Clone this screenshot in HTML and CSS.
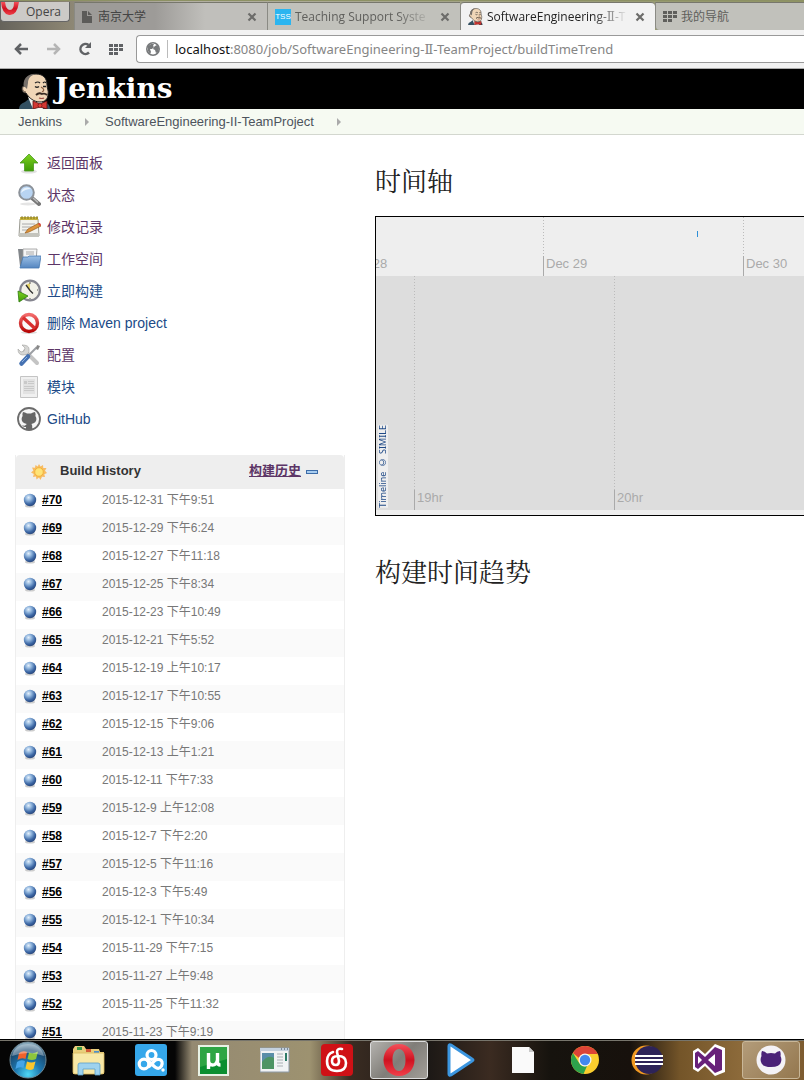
FILE: index.html
```html
<!DOCTYPE html>
<html lang="zh-CN">
<head>
<meta charset="utf-8">
<title>SoftwareEngineering-Ⅱ-TeamProject</title>
<link rel="stylesheet" href="styles.css">
</head>
<body>
<svg class="defs" width="0" height="0" aria-hidden="true">
  <defs>
    <radialGradient id="gBall" cx=".38" cy=".3" r=".7"><stop offset="0" stop-color="#e4f0fb"/><stop offset=".35" stop-color="#8fb4dc"/><stop offset=".75" stop-color="#3b66a4"/><stop offset="1" stop-color="#2a4a80"/></radialGradient>
    <linearGradient id="gGreen" x2="0" y2="1"><stop offset="0" stop-color="#7ed321"/><stop offset="1" stop-color="#3f9a06"/></linearGradient>
    <linearGradient id="gFolder" x2="0" y2="1"><stop offset="0" stop-color="#9cc0e6"/><stop offset="1" stop-color="#5586c0"/></linearGradient>
    <linearGradient id="gRed" x2="0" y2="1"><stop offset="0" stop-color="#f26a6a"/><stop offset="1" stop-color="#b80808"/></linearGradient>
    <radialGradient id="gOrb" cx=".5" cy=".9" r=".9"><stop offset="0" stop-color="#4fd8f5"/><stop offset=".4" stop-color="#1d78b0"/><stop offset=".75" stop-color="#1b4a70"/><stop offset="1" stop-color="#9dbccb"/></radialGradient>
    <linearGradient id="gOpera" x2="0" y2="1"><stop offset="0" stop-color="#f4505a"/><stop offset=".5" stop-color="#cf1220"/><stop offset="1" stop-color="#f0404a"/></linearGradient>
    <symbol id="ball" viewBox="0 0 14 15"><ellipse cx="7" cy="13" rx="5" ry="1.5" fill="#ccc"/><circle cx="7" cy="7" r="6.2" fill="url(#gBall)"/></symbol>
    <symbol id="close" viewBox="0 0 10 10"><path d="M1.5 1.5 8.5 8.5M8.5 1.5 1.5 8.5" stroke="#6c6c6a" stroke-width="2.2"/></symbol>
    <symbol id="grid" viewBox="0 0 14 11"><path d="M0 0h4v3H0zM5 0h4v3H5zM10 0h4v3h-4zM0 4h4v3H0zM5 4h4v3H5zM10 4h4v3h-4zM0 8h4v3H0zM5 8h4v3H5z" fill="currentColor"/></symbol>
    <symbol id="butler" viewBox="0 0 34 36">
      <path d="M0 36q0-5 6-7l5-4 12 3c4 1 8 3 8 8z" fill="#335061"/>
      <path d="M9 24l14 3 1 9H14z" fill="#f4f4f0"/>
      <path d="M7 20C2 20 2 13 5 13 5 5 10 1 17 1c8 0 11 5 11 11 0 4 2 6 1 9 0 5-3 8-8 8-6 0-11-4-14-9z" fill="#f0d6b7" stroke="#222" stroke-width="1"/>
      <path d="M5 14C3 6 9 0 17 1c-5 1-8 4-8 9l-1 6-2-2z" fill="#77706a"/>
      <path d="M4 14c-1 2 0 5 3 5" fill="none" stroke="#6d5a4a"/>
      <path d="M16 10q3-2 5 0M24 10q2-2 3 0" fill="none" stroke="#222" stroke-width="1.200"/>
      <path d="M16 13.500q2 1.500 4 0M24 13.500h3" stroke="#222" stroke-width="1.300" fill="none"/>
      <path d="M22 14q5 3 1 5" stroke="#8a5e40" stroke-width="1.200" fill="none"/>
      <path d="M17 22q3-3 6-1 3-1 5 1" stroke="#3a2c24" stroke-width="1.800" fill="none"/>
      <path d="M20 25q3 1 5 0" stroke="#a05048" stroke-width="1.200" fill="none"/>
      <path d="M14 28l7 3 7-3v8l-7-2-7 2z" fill="#d33833" stroke="#5a100e" stroke-width=".8"/><circle cx="21" cy="32.500" r="2" fill="#ef3d3a" stroke="#5a100e" stroke-width=".6"/>
    </symbol>
  </defs>
</svg>

<div class="screen">
  <nav class="tabs" aria-label="Tabs">
    <button class="opera" type="button">
      <svg width="19" height="14" viewBox="0 0 19 14"><path d="M0 0q1 12 8 13 8 1 10-13h-5q0 8-4 8T4 0z" fill="url(#gOpera)"/></svg>Opera
    </button>
    <div class="tab tab-first">
      <svg width="10" height="12" viewBox="0 0 10 12"><path d="M0 0h5v5h5v7H0z" fill="#5c5b59"/><path d="M6 0l4 4H6z" fill="#5c5b59"/></svg>
      <a href="#" class="tab-title">南京大学</a>
      <button type="button" class="close" aria-label="Close"><svg width="10" height="10"><use href="#close"/></svg></button>
    </div>
    <div class="tab">
      <span class="tss">TSS</span>
      <a href="#" class="tab-title fade">Teaching Support Syste</a>
      <button type="button" class="close" aria-label="Close"><svg width="10" height="10"><use href="#close"/></svg></button>
    </div>
    <div class="tab active">
      <svg width="16" height="17"><use href="#butler"/></svg>
      <a href="#" class="tab-title fade">SoftwareEngineering-Ⅱ-T</a>
      <button type="button" class="close" aria-label="Close"><svg width="10" height="10"><use href="#close"/></svg></button>
    </div>
    <div class="tab tab-last">
      <svg width="14" height="11"><use href="#grid"/></svg>
      <a href="#" class="tab-title">我的导航</a>
    </div>
  </nav>

  <div class="toolbar">
    <button type="button" aria-label="Back"><svg width="15" height="12" viewBox="0 0 15 12"><path d="M14 6H3M7 1 2 6l5 5" fill="none" stroke="#606265" stroke-width="2.500"/></svg></button>
    <button type="button" aria-label="Forward"><svg width="15" height="12" viewBox="0 0 15 12"><path d="M1 6h11M8 1l5 5-5 5" fill="none" stroke="#b5b5b5" stroke-width="2.500"/></svg></button>
    <button type="button" aria-label="Reload"><svg width="14" height="14" viewBox="0 0 14 14"><path d="M11 10.500A5 5 0 1 1 10.500 3" fill="none" stroke="#606265" stroke-width="2.500"/><path d="M13 0v6H7z" fill="#606265"/></svg></button>
    <button type="button" aria-label="Speed dial"><svg width="14" height="11"><use href="#grid"/></svg></button>
    <div class="address">
      <svg width="14" height="14" viewBox="0 0 14 14"><circle cx="7" cy="7" r="6.200" fill="#fff" stroke="#77797b" stroke-width="1.600"/><path d="M2 4l3-2 3 0-1 2 1 1-2 2H4l1 3-1 2-2-3zM9 4l2-1 2 3-1 4-2 1-1-3-2-1 1-2z" fill="#77797b"/></svg>
      <a href="#" class="url"><b>localhost</b>:8080/job/SoftwareEngineering-Ⅱ-TeamProject/buildTimeTrend</a>
    </div>
  </div>

  <header class="brand">
    <svg width="34" height="36"><use href="#butler"/></svg>
    <a href="#">Jenkins</a>
  </header>

  <nav class="crumbs" aria-label="Breadcrumb">
    <a href="#">Jenkins</a><i></i><a href="#">SoftwareEngineering-II-TeamProject</a><i></i>
  </nav>

  <div class="page">
    <aside class="side">
      <ul class="tasks">
        <li><a href="#" class="seen"><svg width="24" height="24" viewBox="0 0 24 24"><ellipse cx="12" cy="20.500" rx="8" ry="2" fill="#e2e2e2"/><path d="M12 3l9 9h-4.500v8h-9v-8H3z" fill="url(#gGreen)" stroke="#4a9a20" stroke-width=".8"/></svg>返回面板</a></li>
        <li><a href="#" class="seen"><svg width="24" height="24" viewBox="0 0 24 24"><ellipse cx="11" cy="21" rx="8" ry="1.500" fill="#e4e4e4"/><path d="M15 15l7 6" stroke="#777" stroke-width="4" stroke-linecap="round"/><path d="M16 15l5 4.500" stroke="#bbb" stroke-width="1.500"/><circle cx="9.500" cy="9.500" r="7.300" fill="#b8d4f2" stroke="#8c9299" stroke-width="2"/><path d="M4 10a6 6 0 0 1 10-4q-6 0-10 4z" fill="#e8f3fd"/></svg>状态</a></li>
        <li><a href="#" class="seen"><svg width="24" height="24" viewBox="0 0 24 24"><path d="M3 4h18l1 17H2z" fill="#f3f3ee" stroke="#9a9a92"/><path d="M2 18h20v4H2z" fill="#c4c4bd"/><path d="M3 2h18v3H3z" fill="#c6b23b"/><path d="M5 1v3M8 1v3M11 1v3M14 1v3M17 1v3M20 1v3" stroke="#6f651e" stroke-width=".8"/><path d="M5 9h13M5 12h10M5 15h6" stroke="#aaa"/><path d="M8 18l3-4L22 8l2 3-12 6z" fill="#dd943b" stroke="#9a5c1a" stroke-width=".7"/><path d="M21 9l2-1 1 2-1 1z" fill="#d44"/></svg>修改记录</a></li>
        <li><a href="#" class="seen"><svg width="24" height="24" viewBox="0 0 24 24"><path d="M1 2h6l1 2h12v15H3z" fill="#82868a"/><path d="M6 2h14l-1 13H6z" fill="#f5f5f5" stroke="#999" stroke-width=".8"/><path d="M9 5h8M9 7h8" stroke="#aaa"/><path d="M6 10h5l1-1h12l-2 12H3z" fill="url(#gFolder)" stroke="#4577b0" stroke-width=".8"/></svg>工作空间</a></li>
        <li><a href="#"><svg width="24" height="24" viewBox="0 0 24 24"><circle cx="13" cy="11.500" r="9.800" fill="#f2f1e8" stroke="#85858f" stroke-width="2.200"/><path d="M13 11.500V4l-4 2z" fill="#e3d064"/><path d="M9 6l4 5.500 3 3" fill="none" stroke="#333" stroke-width="1.300"/><path d="M13 3v2M20 11h1M13 19v1" stroke="#555"/><path d="M1 12l10 5L2 23z" fill="url(#gGreen)" stroke="#2c7a0c" stroke-width=".8"/></svg>立即构建</a></li>
        <li><a href="#"><svg width="24" height="24" viewBox="0 0 24 24"><ellipse cx="12" cy="21.500" rx="8" ry="1.500" fill="#ddd"/><circle cx="12" cy="12" r="8.500" fill="#fafafa" stroke="url(#gRed)" stroke-width="3.400"/><path d="M6 6.500l12 11" stroke="#d93030" stroke-width="3.400"/></svg>删除 Maven project</a></li>
        <li><a href="#" class="seen"><svg width="24" height="24" viewBox="0 0 24 24"><path d="M8 8l12 12" stroke="#c4c4c4" stroke-width="4" stroke-linecap="round"/><path d="M5 2l3 3-1 3-3 1-3-3q0 6 5 6 7 0 6-6 0-4-7-4z" fill="#d6d6d4" stroke="#a9a9a6" stroke-width=".7"/><path d="M20 4l-9 9" stroke="#9c9fa3" stroke-width="2"/><path d="M20 2l3 1-2 4-2-1z" fill="#888"/><path d="M11 13.500L4.500 20.500" stroke="#4672b2" stroke-width="4.500" stroke-linecap="round"/><path d="M10 14l-5 5" stroke="#8fb2e0" stroke-width="1"/></svg>配置</a></li>
        <li><a href="#"><svg width="24" height="24" viewBox="0 0 24 24"><path d="M3.500 1.500h17v21h-17z" fill="#f0f0f0" stroke="#c4c4c4"/><path d="M6 4h12v15H6z" fill="#e2e2e2"/><path d="M7 6h3v3H7zM11 6h6v1h-6zM11 8h6v1h-6zM7 11h10v1H7zM7 13h10v1H7zM7 15h10v1H7z" fill="#c9c9c9"/></svg>模块</a></li>
        <li><a href="#"><svg width="24" height="24" viewBox="0 0 24 24"><circle cx="12" cy="12" r="11" fill="#f6f6f6" stroke="#6c6c6c" stroke-width="1.800"/><path d="M6 5q2 0 4 1.500h4Q16 5 18 5q1 2 .4 4 1 1.500 1 3 0 4-5 5 .8.800.8 2v3.500H9V20q-3 .6-4-2 2.500 1.500 4-.2l.8-.8q-5.200-1-5.200-5 0-1.500 1-3Q5 7 6 5z" fill="#666"/></svg>GitHub</a></li>
      </ul>

      <section class="history">
        <h2>
          <svg width="16" height="16" viewBox="0 0 16 16"><path d="M8 0l1.500 2.500L12 1l.3 3L15.500 4 14 6.800 16 9l-2.700 1.200L14 13l-3-.3L9.500 16 8 13.500 5.500 15.500 5 12.500 2 13l.8-3L0 8.500 2.300 6.500 1 3.500l3 .2L4.500 1l2.200 1.500z" fill="#f8bc62"/><circle cx="8" cy="8" r="4.300" fill="#ffe477" stroke="#f2b33c"/></svg>
          <span>Build History</span>
          <a href="#">构建历史</a>
          <button type="button" aria-label="Collapse"></button>
        </h2>
        <table>
          <tr><td><svg><use href="#ball"/></svg><td><a href="#">#70</a><td>2015-12-31 下午9:51
          <tr><td><svg><use href="#ball"/></svg><td><a href="#">#69</a><td>2015-12-29 下午6:24
          <tr><td><svg><use href="#ball"/></svg><td><a href="#">#68</a><td>2015-12-27 下午11:18
          <tr><td><svg><use href="#ball"/></svg><td><a href="#">#67</a><td>2015-12-25 下午8:34
          <tr><td><svg><use href="#ball"/></svg><td><a href="#">#66</a><td>2015-12-23 下午10:49
          <tr><td><svg><use href="#ball"/></svg><td><a href="#">#65</a><td>2015-12-21 下午5:52
          <tr><td><svg><use href="#ball"/></svg><td><a href="#">#64</a><td>2015-12-19 上午10:17
          <tr><td><svg><use href="#ball"/></svg><td><a href="#">#63</a><td>2015-12-17 下午10:55
          <tr><td><svg><use href="#ball"/></svg><td><a href="#">#62</a><td>2015-12-15 下午9:06
          <tr><td><svg><use href="#ball"/></svg><td><a href="#">#61</a><td>2015-12-13 上午1:21
          <tr><td><svg><use href="#ball"/></svg><td><a href="#">#60</a><td>2015-12-11 下午7:33
          <tr><td><svg><use href="#ball"/></svg><td><a href="#">#59</a><td>2015-12-9 上午12:08
          <tr><td><svg><use href="#ball"/></svg><td><a href="#">#58</a><td>2015-12-7 下午2:20
          <tr><td><svg><use href="#ball"/></svg><td><a href="#">#57</a><td>2015-12-5 下午11:16
          <tr><td><svg><use href="#ball"/></svg><td><a href="#">#56</a><td>2015-12-3 下午5:49
          <tr><td><svg><use href="#ball"/></svg><td><a href="#">#55</a><td>2015-12-1 下午10:34
          <tr><td><svg><use href="#ball"/></svg><td><a href="#">#54</a><td>2015-11-29 下午7:15
          <tr><td><svg><use href="#ball"/></svg><td><a href="#">#53</a><td>2015-11-27 上午9:48
          <tr><td><svg><use href="#ball"/></svg><td><a href="#">#52</a><td>2015-11-25 下午11:32
          <tr><td><svg><use href="#ball"/></svg><td><a href="#">#51</a><td>2015-11-23 下午9:19
        </table>
      </section>
    </aside>

    <main class="main">
      <h1>时间轴</h1>
      <div class="timeline">
        <div class="band days">
          <div class="cell"><span>Dec 28</span></div>
          <div class="cell"><span>Dec 29</span></div>
          <div class="cell"><span>Dec 30</span></div>
        </div>
        <div class="band hours">
          <div class="cell"><span>19hr</span></div>
          <div class="cell"><span>20hr</span></div>
        </div>
        <div class="event"></div>
        <a href="#" class="credit">Timeline © SIMILE</a>
      </div>
      <h1>构建时间趋势</h1>
    </main>
  </div>

  <footer class="taskbar">
    <button type="button" aria-label="Start"><svg width="38" height="38" viewBox="0 0 38 38"><circle cx="19" cy="19" r="18" fill="url(#gOrb)" stroke="#6d8794"/><path d="M10 12q4-3 8-1l-1.500 7q-4-2-8 1z" fill="#f0622a"/><path d="M20 11.500q4 2 9-1l-2 7.500q-4 2-8.500 0z" fill="#8cc63c"/><path d="M8 21q4-3 8-1l-1.500 7q-4-2-8 1z" fill="#46a5e8"/><path d="M18 20.500q4 2 8.500 0L24.500 28q-4 2-8-.5z" fill="#fbc62c"/><path d="M3 15Q6 3 19 3t16 12q-16-6-32 0z" fill="#fff" opacity=".35"/></svg></button>
    <button type="button" aria-label="Explorer"><svg width="34" height="32" viewBox="0 0 34 32"><path d="M3 2h9l2 3h13l1 3h4v22H1V5z" fill="#e9cf7c"/><path d="M5 3h5v3H5z" fill="#3a9a48"/><path d="M14 5h5v3h-5z" fill="#d45b38"/><path d="M22 7h5v3h-5z" fill="#4b90cf"/><path d="M1 9h31v19q0 2-2 2H3q-2 0-2-2z" fill="#f8e8a6" stroke="#d8b85e" stroke-width=".8"/><path d="M6 31V21q0-2 2-2h18q2 0 2 2v10h-5v-6H11v6z" fill="#9ed2ee" stroke="#5a9ec8" stroke-width=".8"/></svg></button>
    <button type="button" aria-label="Cloud"><svg width="32" height="32" viewBox="0 0 32 32"><rect width="32" height="32" rx="3" fill="#35a7ea"/><g fill="none" stroke="#fff" stroke-width="3.200"><circle cx="16.500" cy="11" r="4.500"/><circle cx="9" cy="20" r="4.800"/><path d="M12 16l8 7q4 3 6.500-1 2-5-2-6.500-4-1-6 2.500l-5 5"/></g><circle cx="28" cy="26" r="1.700" fill="#fff"/></svg></button>
    <button type="button" aria-label="Torrent"><svg width="31" height="31" viewBox="0 0 31 31"><path d="M0 0h31v31H0z" fill="#e8f2e5"/><path d="M2 2h27v27H2z" fill="#0b8f30"/><path d="M2 2h27v12L2 22z" fill="#2ea544"/><path d="M10.500 24V8M10.500 15q0 5 4 5t5-5V8M19.500 8v9q0 3 3 3" fill="none" stroke="#fff" stroke-width="3.400"/></svg></button>
    <button type="button" aria-label="Viewer"><svg width="30" height="26" viewBox="0 0 30 26"><path d="M0 1h29v24H0z" fill="#f1f3f4" stroke="#8c99a5"/><path d="M0 1h29v3H0z" fill="#c4d1de"/><path d="M21 2h1M24 2h1M27 2h1" stroke="#345"/><path d="M2 6h12v16H2z" fill="#5a8ea8"/><path d="M2 15q6-8 12-4v11H2z" fill="#4d9464"/><path d="M17 7h6M17 10h6M17 13h6M17 16h6M17 19h6" stroke="#a9afb4"/><path d="M25 6h2v8h-2z" fill="#2d7b68"/></svg></button>
    <button type="button" aria-label="Music"><svg width="32" height="32" viewBox="0 0 32 32"><rect width="32" height="32" rx="4" fill="#cf1116"/><path d="M21 5q-5-1-5 3l2 9q0 4-3 4-4 0-4-4 0-5 6-5 8 0 8 7 0 8-9 8-10 0-10-10 0-7 6-9" fill="none" stroke="#fff" stroke-width="2.600" stroke-linecap="round"/></svg></button>
    <button type="button" aria-label="Opera" class="running"><svg width="32" height="32" viewBox="0 0 32 32"><path fill-rule="evenodd" d="M16 0c9 0 15.500 7 15.500 16S25 32 16 32 .5 25 .5 16 7 0 16 0zm0 5c-4.500 0-6.500 5-6.500 11s2 11 6.500 11 6.500-5 6.500-11S20.500 5 16 5z" fill="url(#gOpera)"/></svg></button>
    <button type="button" aria-label="Player"><svg width="28" height="34" viewBox="0 0 28 34"><path d="M2 3v28q0 2 2 1l21-14q2-1 0-2L4 2Q2 1 2 3z" fill="#fff" stroke="#3b96e0" stroke-width="3"/></svg></button>
    <button type="button" aria-label="Document"><svg width="22" height="28" viewBox="0 0 22 28"><path d="M0 1h17l5 5v21H0z" fill="#fafafa"/><path d="M17 1v5h5z" fill="#c9c9c9"/></svg></button>
    <button type="button" aria-label="Chrome"><svg width="30" height="30" viewBox="0 0 30 30"><circle cx="15" cy="15" r="14" fill="#fbce2e"/><path d="M2.900 8A14 14 0 0 1 27.700 9H15a6.500 6.500 0 0 0-6 4z" fill="#dd4437"/><path d="M2.900 8l6.500 10.500A6.500 6.500 0 0 0 17 21l-3.500 8A14 14 0 0 1 2.900 8z" fill="#2da24c"/><circle cx="15" cy="15" r="6.500" fill="#f4f4f4"/><circle cx="15" cy="15" r="5.200" fill="#4488ee"/></svg></button>
    <button type="button" aria-label="Eclipse"><svg width="32" height="30" viewBox="0 0 32 30"><circle cx="15" cy="15" r="14.500" fill="#f29a22"/><circle cx="18" cy="15" r="14" fill="#2d2358"/><path d="M4 11h28M4 15h28M4 19h28" stroke="#fff" stroke-width="2"/></svg></button>
    <button type="button" aria-label="Visual Studio"><svg width="32" height="32" viewBox="0 0 32 32"><path d="M22 0l10 4v24l-10 4-10-10-7 6-5-3V7l5-3 7 6z" fill="#fff"/><path fill-rule="evenodd" d="M22 3l7 3v20l-7 3-10-10-7 6-3-2V9l3-2 7 6zM22 10l-7 6 7 6zM5 12v8l4-4z" fill="#68217a"/></svg></button>
    <button type="button" aria-label="GitHub" class="running"><svg width="30" height="30" viewBox="0 0 30 30"><circle cx="15" cy="15" r="14.500" fill="#f4f2f6"/><path d="M6 6q3 0 5 2.500 4-1 8 0Q21 6 24 6q1 2 .5 5 1.500 3 .5 6-1 5-10 5T5 17q-1-3 .5-6Q5 8 6 6z" fill="#4b2278"/></svg></button>
  </footer>
</div>
</body>
</html>
```
FILE: styles.css
```css
* { box-sizing: border-box; }
body {
  margin: 0;
  background: #fff;
  font-family: "Liberation Sans", "Noto Sans CJK SC", sans-serif;
  color: #333;
}
a { text-decoration: none; color: inherit; }
button { border: 0; padding: 0; background: none; font: inherit; color: inherit; }
svg { flex: none; display: block; }
.defs { position: absolute; }
.screen { display: flex; flex-direction: column; height: 100vh; overflow: hidden; }

/* Browser tabs */
.tabs {
  display: flex;
  flex: none;
  height: 30px;
  padding-top: 2px;
  background: linear-gradient(#8d9164 0 1px, transparent 1px), linear-gradient(90deg, #66635b, #8a8472 65px, #b3b0a3 180px, #8f9463);
  font: 12px/16px "Open Sans", "DejaVu Serif", "Noto Sans CJK SC", sans-serif;
  color: #555;
}
.opera {
  display: flex;
  align-items: flex-start;
  gap: 6px;
  width: 70px;
  height: 20px;
  margin-right: 4px;
  padding-top: 2px;
  border: 1px solid #666;
  border-top: 0;
  border-radius: 0 0 4px 4px;
  background: #cccac7;
  color: #444;
  white-space: nowrap;
}
.opera svg { margin-top: -2px; }
.tab {
  display: flex;
  align-items: center;
  gap: 4px;
  flex: 0 0 193px;
  min-width: 0;
  padding: 0 10px 0 7px;
  border-left: 1px solid #8a8a84;
  border-top: 1px solid #77776c;
  background: #c1c1bb;
  color: #5f5f5c;
}
.tab-first { gap: 6px; background: linear-gradient(90deg, #9d9b98 80px, #c0bfbb 130px); color: #444; }
.tab.active { flex-basis: 195px; gap: 3px; background: #f2f2f2; color: #222; border-radius: 4px 4px 0 0; }
.tab-last { flex: 1; border-radius: 0 0 0 4px; }
.tab-title { flex: 1; min-width: 0; overflow: hidden; white-space: nowrap; }
.fade { -webkit-mask-image: linear-gradient(90deg, #000 calc(100% - 35px), transparent); mask-image: linear-gradient(90deg, #000 calc(100% - 35px), transparent); }
.close { margin-left: 4px; }
.tss { background: #2bb5f0; color: #fff; width: 16px; height: 16px; font: 8px/16px "Liberation Sans", sans-serif; text-align: center; }

/* Address row */
.toolbar {
  display: flex;
  align-items: center;
  flex: none;
  gap: 17px;
  height: 39px;
  padding-left: 14px;
  background: #f2f2f2;
  border-bottom: 1px solid #aaa;
  color: #606265;
}
.address {
  display: flex;
  align-items: center;
  flex: 1;
  height: 28px;
  margin-left: -4px;
  padding-left: 9px;
  gap: 7px;
  background: #fff;
  border: 1px solid #999;
  border-right: 0;
  border-radius: 4px 0 0 4px;
}
.url {
  border-left: 1px solid #bbb;
  padding-left: 7px;
  font: 13px/18px "Noto Sans", "DejaVu Serif", "Noto Sans CJK SC", sans-serif;
  color: #858585;
  white-space: nowrap;
}
.url b { font-weight: 400; color: #111; }

/* Jenkins header */
.brand {
  display: flex;
  align-items: flex-end;
  gap: 2px;
  flex: none;
  height: 40px;
  padding-left: 19px;
  background: #000;
}
.brand a { align-self: center; color: #fff; font: bold 28px/38px "DejaVu Serif", "Liberation Serif", serif; }
.crumbs {
  display: flex;
  align-items: center;
  flex: none;
  height: 26px;
  padding-left: 18px;
  background: #f6faf2;
  border-bottom: 1px solid #d3d7cf;
  font-size: 13px;
  color: #4d545d;
}
.crumbs i { margin: 0 16px 0 23px; border: 4px solid transparent; border-left-color: #aaa; border-right: 0; }

/* Page */
.page { display: flex; flex: 1; min-height: 0; overflow: hidden; }
.side { flex: none; width: 345px; padding: 12px 0 0 15px; }
.tasks { list-style: none; margin: 0 0 20px; padding: 0; }
.tasks a {
  display: flex;
  align-items: center;
  gap: 6px;
  height: 32px;
  padding-left: 2px;
  font-size: 14px;
  line-height: 20px;
  color: #204a87;
}
.tasks .seen { color: #5c3566; }

.history { border: 1px solid #eee; border-top: 0; }
.history h2 {
  display: flex;
  align-items: center;
  height: 34px;
  margin: 0;
  padding: 0 26px 2px 15px;
  background: #eee;
  border-radius: 4px 4px 0 0;
  font-size: 13px;
  line-height: 20px;
}
.history h2 span { flex: 1; margin-left: 13px; }
.history h2 a { color: #5c3566; text-decoration: underline; }
.history h2 button { width: 12px; height: 4px; margin: 2px 0 0 5px; border: 1px solid #3c6ca8; background: #a8cdf0; }
.history h2 svg { margin-top: 2px; }
.history table { width: 100%; border-collapse: collapse; table-layout: fixed; }
.history tr:nth-child(even) { background: #fafafa; }
.history td { height: 28px; padding: 0 0 6px; line-height: 20px; vertical-align: middle; font-size: 12px; color: #777; white-space: nowrap; }
.history td:nth-child(1) { width: 26px; padding-left: 7px; padding-bottom: 5px; }
.history td:nth-child(2) { width: 60px; }
.history td svg { width: 14px; height: 15px; }
.history td a { color: #000; font-weight: bold; text-decoration: underline; }

.main { flex: 1; min-width: 0; margin-left: 30px; padding-top: 28px; }
h1 {
  margin: 0;
  height: 40px;
  font: 400 26px/40px "Liberation Serif", "Noto Serif CJK SC", "Noto Sans CJK SC", serif;
  color: #222;
}
.timeline {
  position: relative;
  margin: 13px 0 38px;
  border: 1px solid #000;
  border-right: 0;
  background: #eee;
  padding-bottom: 5px;
  overflow: hidden;
}
.band { display: flex; overflow: hidden; font-size: 13px; line-height: 15px; color: #aaa; }
.days { height: 59px; background: #eee; }
.days .cell:first-child { margin-left: -33px; }
.hours { height: 234px; padding-left: 38px; background: #ddd; }
.cell { display: flex; align-items: flex-end; flex: 0 0 200px; background: repeating-linear-gradient(#bbb 0 1px, transparent 1px 3px) left / 1px 100% no-repeat; }
.cell span { height: 20px; padding-left: 2px; border-left: 1px solid #aaa; }
.event { position: absolute; left: 321px; top: 14px; width: 1px; height: 6px; background: #2d8fd8; }
.credit {
  position: absolute;
  left: 2px;
  bottom: 7px;
  writing-mode: vertical-rl;
  transform: rotate(180deg);
  background: #eee;
  font: 9px/10px "Noto Sans", sans-serif;
  color: #204a87;
}

/* Desktop taskbar */
.taskbar {
  display: flex;
  gap: 4px;
  flex: none;
  height: 41px;
  border-top: 1px solid #000;
  background: linear-gradient(90deg, #050505 175px, #958a72 192px, #9d9270 310px, #3a2c22 350px, #1d1916 430px, #3b2b21 490px, #16130e 550px, #17110c 630px, #745529 680px, #8c6a3a 740px, #7d5c30);
  box-shadow: inset 0 1px #77756c;
}
.taskbar button { display: flex; align-items: center; justify-content: center; flex: 0 0 58px; }
.taskbar button:first-child { flex-basis: 56px; }
.taskbar .running { margin: 1px 0; border: 1px solid #ddd; border-radius: 3px; background: linear-gradient(135deg, #b4b2ae, #807d78 50%, #a29e98); }
.taskbar .running:last-child { background: linear-gradient(135deg, #b39c7a, #94774e); border-color: #c9b798; }
```
